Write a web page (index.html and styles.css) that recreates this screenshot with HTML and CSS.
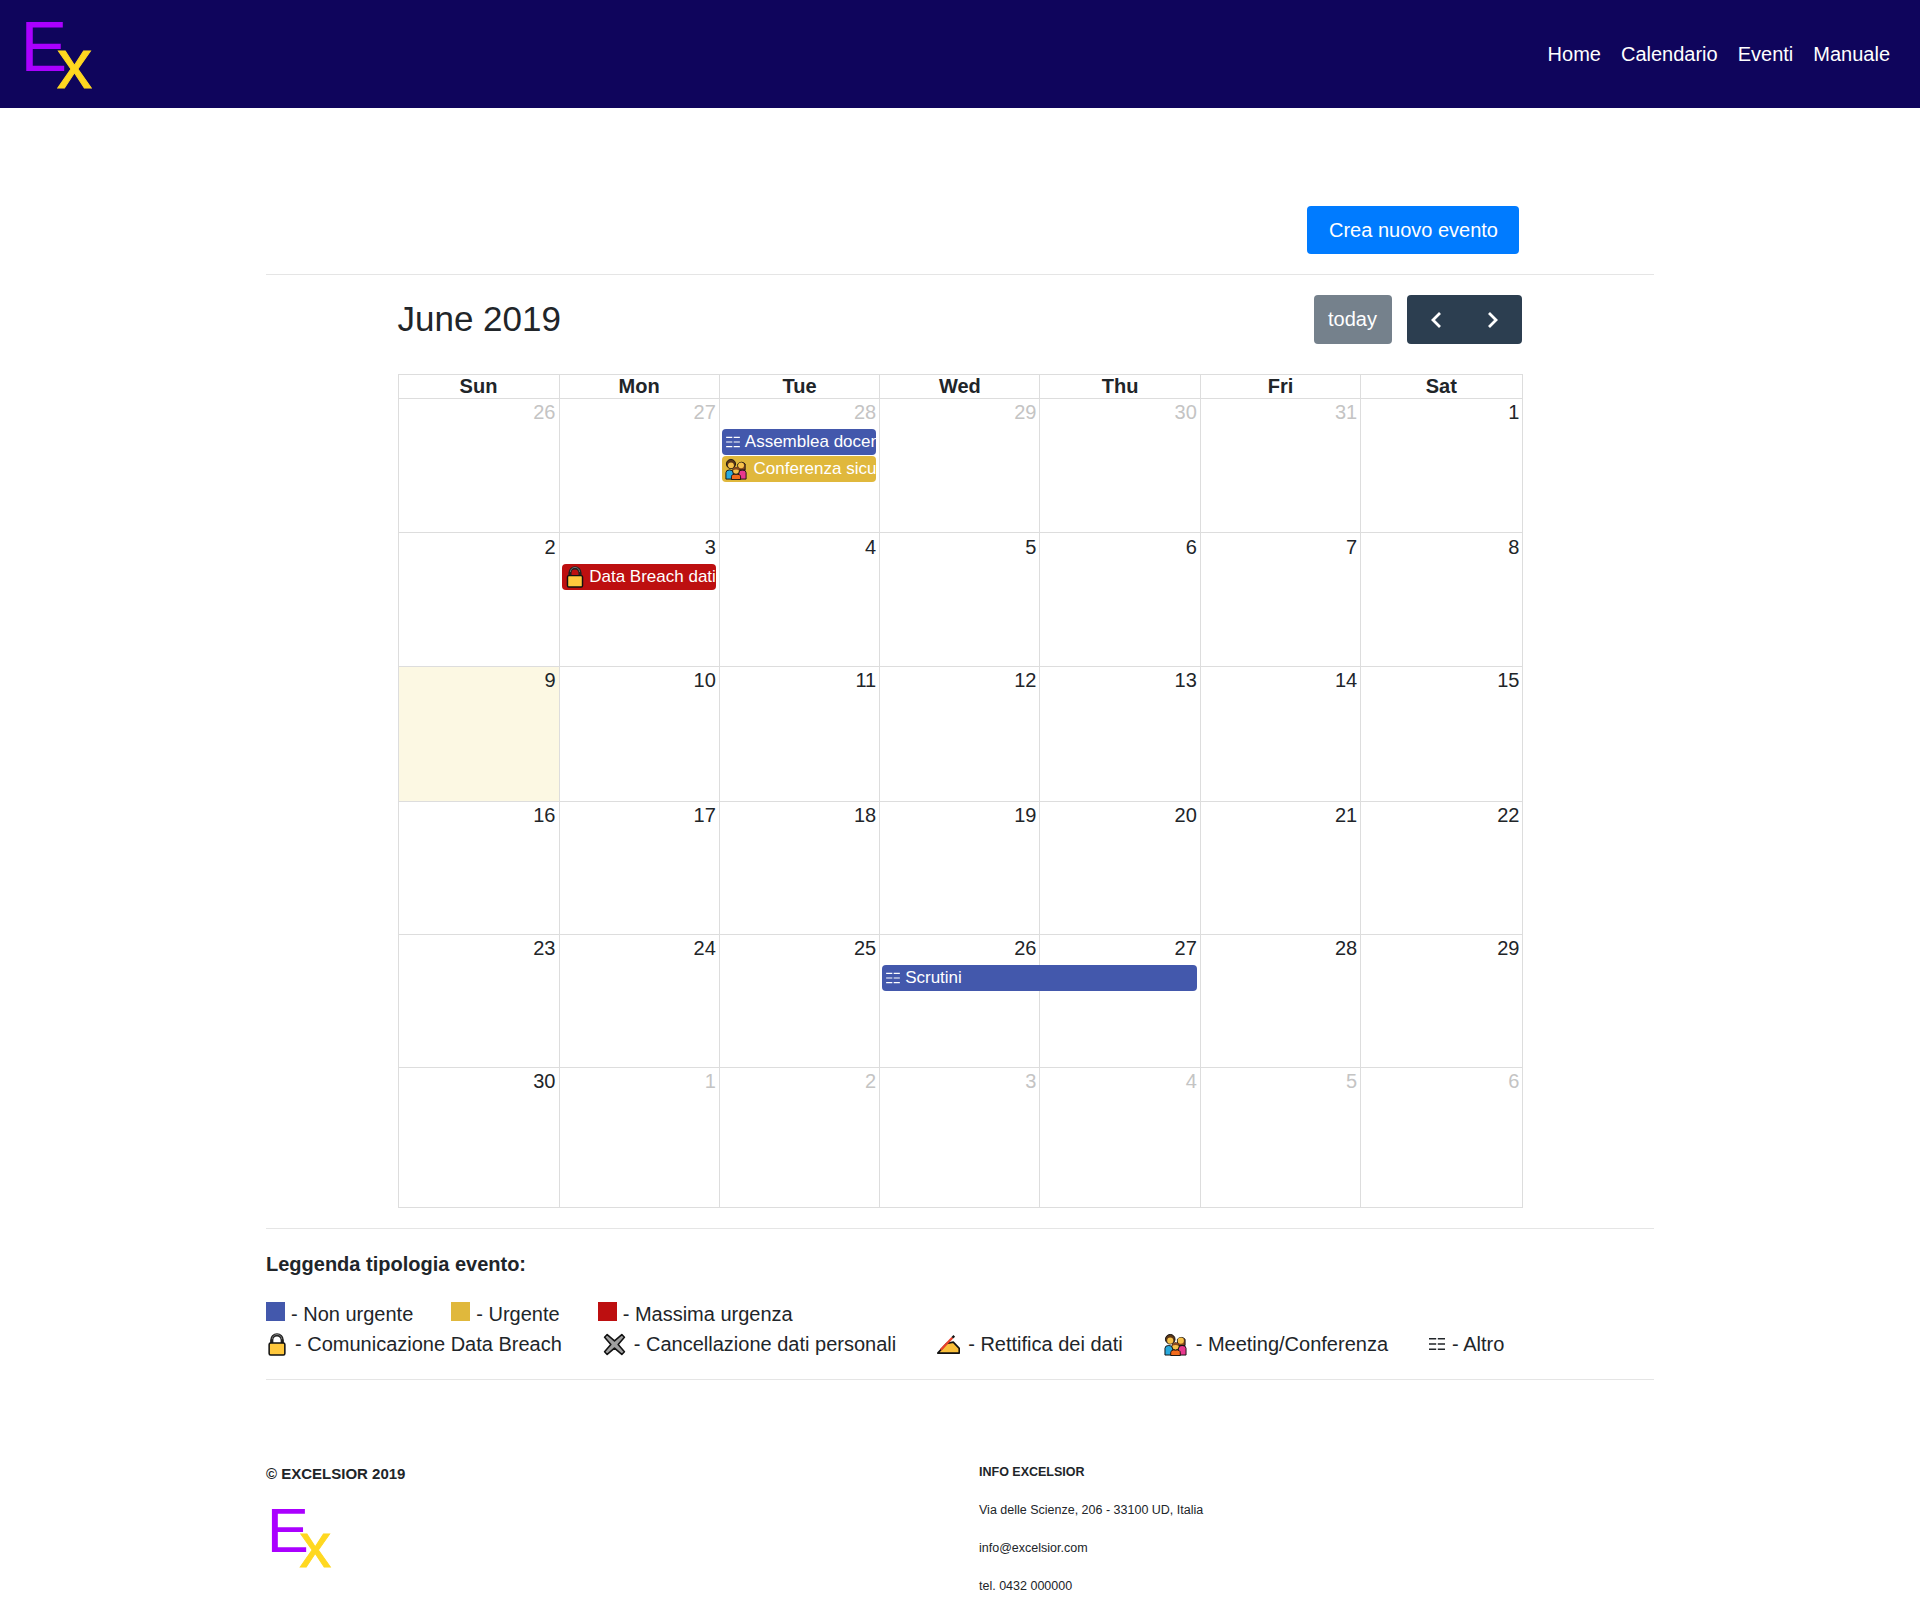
FILE: index.html
```html
<!DOCTYPE html>
<html lang="it">
<head>
  <meta charset="UTF-8" />
  <title>Calendario - Excelsior</title>
  <link rel="stylesheet" href="styles.css">
</head>
<body>
  <svg class="sprites" width="0" height="0">
    <symbol id="i-logo" viewBox="0 0 76 92">
      <text x="0.5" y="63" font-family="Liberation Sans" font-size="70" fill="#aa00ff">E</text>
      <text x="37" y="79.500" font-family="Liberation Sans" font-size="70" fill="#ffd820" stroke="#ffd820" stroke-width="1">x</text>
    </symbol>
    <symbol id="i-altro" viewBox="0 0 16 14">
      <path d="M0 1h7.200v1.400H0zM8.800 1H16v1.400H8.800zM0 6.300h7.200v1.400H0zM8.800 6.300H16v1.400H8.800zM0 11.600h7.200V13H0zM8.800 11.600H16V13H8.800z" fill="currentColor"/>
    </symbol>
    <symbol id="i-lock" viewBox="0 0 20 24">
      <path d="M4.500 12V7.500a5.500 5.500 0 0 1 11 0V12" fill="none" stroke="#222" stroke-width="3.400"/>
      <path d="M5 6.500a5 5 0 0 1 10 0" fill="none" stroke="#777" stroke-width="1"/>
      <rect x="1.800" y="10.500" width="16.400" height="12.500" rx="1.500" fill="#ffc83d" stroke="#111" stroke-width="1.600"/>
    </symbol>
    <symbol id="i-family" viewBox="0 0 24 24">
      <path d="M1 23v-7q0-3 4-3t4 3v7z" fill="#29a9dc" stroke="#111"/>
      <path d="M15 23v-7q0-3 4-3t4 3v7z" fill="#e8388e" stroke="#111"/>
      <circle cx="6.500" cy="6.500" r="5" fill="#5b3517" stroke="#111"/>
      <path d="M14 13V6.500a5.200 5.200 0 0 1 8 0V13z" fill="#8a4b1f" stroke="#111"/>
      <circle cx="6.500" cy="8" r="3.200" fill="#f7c24a"/>
      <circle cx="17.500" cy="8" r="3.200" fill="#f7c24a"/>
      <path d="M7 23.500v-3q0-3 5-3t5 3v3z" fill="#f36b1c" stroke="#111"/>
      <circle cx="12" cy="14" r="3.800" fill="#f7c24a" stroke="#111"/>
      <path d="M8.400 13.500a3.600 3.600 0 0 1 7.200 0q-3.600-2-7.200 0z" fill="#8a4b1f"/>
    </symbol>
    <symbol id="i-cross" viewBox="0 0 22 22">
      <path d="M4 1.500l7 6 7-6 2.500 2.500-6 7 6 7-2.500 2.500-7-6-7 6L1.500 18l6-7-6-7z" fill="#a0a0a0" stroke="#111" stroke-width="1.500" stroke-linejoin="round"/>
    </symbol>
    <symbol id="i-pen" viewBox="0 0 24 20">
      <path d="M0.800 19L10 9l7-1.500 6.200 6.500v5z" fill="#f9bf3b" stroke="#111" stroke-width="1.700" stroke-linejoin="round"/>
      <path d="M4 15.500L16 3" stroke="#e8402a" stroke-width="2.400"/>
      <path d="M16 3l2-2" stroke="#111" stroke-width="2.400"/>
    </symbol>
  </svg>

  <header class="topbar">
    <svg class="logo"><use href="#i-logo"/></svg>
    <nav class="topnav">
      <a href="#">Home</a>
      <a href="#">Calendario</a>
      <a href="#">Eventi</a>
      <a href="#">Manuale</a>
    </nav>
  </header>

  <main class="content">
    <div class="actions">
      <a class="btn-new" href="#">Crea nuovo evento</a>
    </div>
    <hr>

    <section class="calendar">
      <div class="cal-toolbar">
        <h2>June 2019</h2>
        <div class="cal-buttons">
          <button class="btn-today">today</button>
          <div class="btn-pair">
            <button aria-label="prev"><svg width="14" height="20" viewBox="0 0 14 20"><path d="M11 3L4 10l7 7" fill="none" stroke="#fff" stroke-width="2.800"/></svg></button>
            <button aria-label="next"><svg width="14" height="20" viewBox="0 0 14 20"><path d="M3 3l7 7-7 7" fill="none" stroke="#fff" stroke-width="2.800"/></svg></button>
          </div>
        </div>
      </div>

      <div class="cal-grid">
        <div class="cal-head">
          <span>Sun</span><span>Mon</span><span>Tue</span><span>Wed</span><span>Thu</span><span>Fri</span><span>Sat</span>
        </div>

        <div class="week">
          <i class="bg"></i><i class="bg"></i><i class="bg"></i><i class="bg"></i><i class="bg"></i><i class="bg"></i><i class="bg"></i>
          <span class="num off">26</span><span class="num off">27</span><span class="num off">28</span><span class="num off">29</span><span class="num off">30</span><span class="num off">31</span><span class="num">1</span>
          <div class="event blue c3 r2"><svg class="ev-icon"><use href="#i-altro"/></svg>Assemblea docenti</div>
          <div class="event yellow c3 r3"><svg class="ev-face"><use href="#i-family"/></svg>&nbsp;Conferenza sicurezza</div>
        </div>

        <div class="week wk2">
          <i class="bg"></i><i class="bg"></i><i class="bg"></i><i class="bg"></i><i class="bg"></i><i class="bg"></i><i class="bg"></i>
          <span class="num">2</span><span class="num">3</span><span class="num">4</span><span class="num">5</span><span class="num">6</span><span class="num">7</span><span class="num">8</span>
          <div class="event red c2 r2"><svg class="ev-lock"><use href="#i-lock"/></svg>&nbsp;Data Breach dati</div>
        </div>

        <div class="week wk3">
          <i class="bg today"></i><i class="bg"></i><i class="bg"></i><i class="bg"></i><i class="bg"></i><i class="bg"></i><i class="bg"></i>
          <span class="num">9</span><span class="num">10</span><span class="num">11</span><span class="num">12</span><span class="num">13</span><span class="num">14</span><span class="num">15</span>
        </div>

        <div class="week wk4">
          <i class="bg"></i><i class="bg"></i><i class="bg"></i><i class="bg"></i><i class="bg"></i><i class="bg"></i><i class="bg"></i>
          <span class="num">16</span><span class="num">17</span><span class="num">18</span><span class="num">19</span><span class="num">20</span><span class="num">21</span><span class="num">22</span>
        </div>

        <div class="week wk4">
          <i class="bg"></i><i class="bg"></i><i class="bg"></i><i class="bg"></i><i class="bg"></i><i class="bg"></i><i class="bg"></i>
          <span class="num">23</span><span class="num">24</span><span class="num">25</span><span class="num">26</span><span class="num">27</span><span class="num">28</span><span class="num">29</span>
          <div class="event blue span2 r2"><svg class="ev-icon"><use href="#i-altro"/></svg>Scrutini</div>
        </div>

        <div class="week last">
          <i class="bg"></i><i class="bg"></i><i class="bg"></i><i class="bg"></i><i class="bg"></i><i class="bg"></i><i class="bg"></i>
          <span class="num">30</span><span class="num off">1</span><span class="num off">2</span><span class="num off">3</span><span class="num off">4</span><span class="num off">5</span><span class="num off">6</span>
        </div>
      </div>
    </section>

    <hr class="after-cal">

    <section class="legend">
      <h5>Leggenda tipologia evento:</h5>
      <div class="legend-row first">
        <span class="item"><b class="swatch blue"></b>- Non urgente</span>
        <span class="item"><b class="swatch yellow"></b>- Urgente</span>
        <span class="item"><b class="swatch red"></b>- Massima urgenza</span>
      </div>
      <div class="legend-row">
        <span class="item"><svg class="lg-lock"><use href="#i-lock"/></svg>- Comunicazione Data Breach</span>
        <span class="item"><svg class="lg-icon"><use href="#i-cross"/></svg>- Cancellazione dati personali</span>
        <span class="item"><svg class="lg-icon"><use href="#i-pen"/></svg>- Rettifica dei dati</span>
        <span class="item"><svg class="lg-icon lg-wide"><use href="#i-family"/></svg>- Meeting/Conferenza</span>
        <span class="item"><svg class="lg-altro"><use href="#i-altro"/></svg>- Altro</span>
      </div>
    </section>
    <hr class="after-legend">

    <footer class="footer">
      <div class="foot-left">
        <h6>&copy; EXCELSIOR 2019</h6>
        <svg class="logo-small"><use href="#i-logo"/></svg>
      </div>
      <div class="foot-right">
        <h6>INFO EXCELSIOR</h6>
        <p>Via delle Scienze, 206 - 33100 UD, Italia</p>
        <p>info@excelsior.com</p>
        <p>tel. 0432 000000</p>
      </div>
    </footer>
  </main>
</body>
</html>
```

FILE: styles.css
```css
:root {
  --blue: #4358ac;
  --yellow: #e0b83c;
  --red: #bd0f10;
  --line: #dddddd;
  --cols: 161px repeat(6, 1fr);
}
* { box-sizing: border-box; }
body {
  margin: 0;
  min-height: 1615px;
  font-family: "Liberation Sans", Arial, sans-serif;
  font-size: 20px;
  line-height: 1.5;
  color: #212529;
  background: #fff;
}
.sprites { position: absolute; }

.topbar {
  height: 108px;
  background: #0f055c;
  display: flex;
  align-items: center;
  justify-content: space-between;
  padding: 0 20px;
}
.logo { width: 76px; height: 92px; display: block; }
.topnav { display: flex; }
.topnav a { color: #fff; text-decoration: none; padding: 0 10px; }

.content { width: 1388px; margin: 0 auto; }
hr { border: 0; border-top: 1px solid #e5e5e5; margin: 20px 0; }

.actions { display: flex; justify-content: flex-end; padding: 98px 135px 0 0; }
.btn-new {
  background: #007bff;
  color: #fff;
  text-decoration: none;
  padding: 9px 21px 9px 22px;
  border-radius: 4px;
  height: 48px;
}

.calendar { width: 1125px; margin: 0 auto; }
.cal-toolbar {
  display: flex;
  justify-content: space-between;
  align-items: center;
  margin-bottom: 30px;
  height: 49px;
  padding-right: 1px;
}
.cal-toolbar h2 { margin: 0 0 2px; font-size: 35px; font-weight: 400; line-height: 1.2; }
.cal-buttons { display: flex; gap: 15px; }
.cal-buttons button {
  font: inherit;
  color: #fff;
  border: 0;
  height: 49px;
  background: #2c3e50;
}
.btn-today { width: 78px; border-radius: 4px; opacity: .65; padding: 0 0 2px; }
.btn-pair { display: flex; border-radius: 4px; overflow: hidden; }
.btn-pair button { width: 57.5px; padding: 0 0 0 1px; display: flex; align-items: center; justify-content: center; }

.cal-grid { border: 1px solid var(--line); width: 1125px; }
.cal-head {
  display: grid;
  grid-template-columns: var(--cols);
  height: 24px;
  font-weight: 700;
  text-align: center;
  line-height: 23px;
  border-bottom: 1px solid var(--line);
}
.cal-head span { border-right: 1px solid var(--line); }
.cal-head span:last-child { border-right: 0; }

.week {
  display: grid;
  grid-template-columns: var(--cols);
  grid-template-rows: 30px 27px 27px 1fr;
  height: 134px;
  border-bottom: 1px solid var(--line);
}
.wk2 { grid-template-rows: 31px 27px 27px 1fr; }
.wk2 .num { padding-top: 3px; }
.wk3 { height: 135px; }
.wk4 { height: 133px; }
.week.last { height: 139px; border-bottom: 0; }
.bg { grid-row: 1 / 5; border-right: 1px solid var(--line); }
.bg:nth-child(1) { grid-column: 1; }
.bg:nth-child(2) { grid-column: 2; }
.bg:nth-child(3) { grid-column: 3; }
.bg:nth-child(4) { grid-column: 4; }
.bg:nth-child(5) { grid-column: 5; }
.bg:nth-child(6) { grid-column: 6; }
.bg:nth-child(7) { grid-column: 7; border-right: 0; }
.bg.today { background: #fcf8e3; }

.num { grid-row: 1; text-align: right; padding: 2px 4px 0 0; line-height: 23px; }
.num:nth-child(8) { grid-column: 1; }
.num:nth-child(9) { grid-column: 2; }
.num:nth-child(10) { grid-column: 3; }
.num:nth-child(11) { grid-column: 4; }
.num:nth-child(12) { grid-column: 5; }
.num:nth-child(13) { grid-column: 6; }
.num:nth-child(14) { grid-column: 7; padding-right: 2px; }
.num.off { color: #c4c4c4; }

.event {
  margin: 0 4px 1px 2px;
  height: 26px;
  border-radius: 4px;
  color: #fff;
  font-size: 17px;
  line-height: 26px;
  padding-left: 4px;
  white-space: nowrap;
  overflow: hidden;
  display: flex;
  align-items: center;
}
.c2 { grid-column: 2; }
.c3 { grid-column: 3; }
.span2 { grid-column: 4 / span 2; }
.r2 { grid-row: 2; }
.r3 { grid-row: 3; }
.blue { background: var(--blue); }
.yellow { background: var(--yellow); }
.red { background: var(--red); }
.ev-icon { width: 14px; height: 12px; margin-right: 5px; flex: none; }
.ev-face { width: 22px; height: 22px; flex: none; margin: 0 2px 0 -1px; }
.ev-lock { width: 20px; height: 22px; flex: none; margin-left: -1px; }

.after-cal { margin: 20px 0 0; }
.legend { padding-top: 20px; }
.legend h5 { margin: 0 0 20px; font-size: 20px; font-weight: 700; line-height: 30px; }
.legend-row { display: flex; gap: 41px; height: 30px; align-items: center; }
.legend-row.first { gap: 38px; }
.item { display: flex; align-items: center; white-space: nowrap; }
.swatch { width: 19px; height: 19px; margin-right: 6px; margin-top: -5px; }
.lg-lock { width: 20px; height: 23px; margin: 0 8px 0 1px; }
.lg-icon { width: 23px; height: 23px; margin-right: 8px; }
.lg-wide { margin-right: 9px; }
.lg-altro { width: 16px; height: 14px; margin-right: 7px; }
.after-legend { margin: 20px 0 0; }

.footer { display: flex; padding-top: 84px; }
.foot-left { width: 713px; }
.foot-left h6 { margin: 0 0 11px; font-size: 15px; line-height: 20px; font-weight: 700; }
.logo-small { width: 69px; height: 83px; display: block; }
.foot-right { font-size: 12.500px; margin-top: -2px; }
.foot-right h6 { margin: 0 0 18px; font-size: 12.500px; line-height: 20px; font-weight: 700; }
.foot-right p { margin: 0 0 18px; line-height: 20px; }
```
